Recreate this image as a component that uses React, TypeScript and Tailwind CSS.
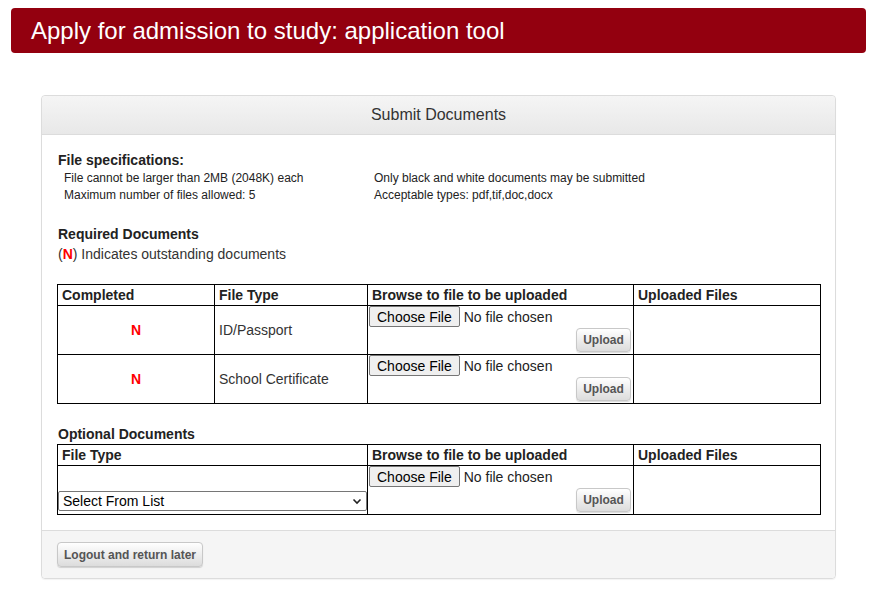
import React from "react";

const font = { fontFamily: '"Liberation Sans", Arial, sans-serif' };

function ChooseFile() {
  return (
    <div className="flex items-center h-[21px]">
      <span className="h-[21px] px-[7px] flex items-center bg-[#efefef] border border-[#767676] rounded-[2px] text-[14px] text-black leading-none">
        Choose File
      </span>
      <span className="ml-[4px] text-[14px] text-[#222] leading-none">No file chosen</span>
    </div>
  );
}

function UploadBtn() {
  return (
    <div className="flex justify-end mt-[1px] pr-[2px]">
      <span className="w-[55px] h-[24px] flex items-center justify-center text-[12px] font-bold text-[#555] border border-[#c8c8c8] rounded-[4px] bg-gradient-to-b from-white to-[#dcdcdc] shadow-[0_1px_1px_rgba(0,0,0,0.15)]">
        Upload
      </span>
    </div>
  );
}

export default function App() {
  const th = "border border-black text-left font-bold text-[14px] text-[#222] px-[4px] h-[21px] leading-[18px] align-middle";
  const tdBase = "border border-black text-[14px] text-[#333]";
  const tdMid = `${tdBase} align-middle`;
  const tdTop = `${tdBase} align-top p-0 pl-[1px] pt-0 pb-[1px]`;
  return (
    <div className="min-h-[592px] bg-white pt-[8px]" style={font}>
      <div className="ml-[11px] mr-[12px] h-[45px] bg-[#93000f] rounded-[4px] flex items-center pl-[20px]">
        <h1 className="text-white text-[24px] leading-none">Apply for admission to study: application tool</h1>
      </div>

      <div className="ml-[41px] w-[795px] mt-[42px] border border-[#dcdcdc] rounded-[4px] shadow-[0_1px_1px_rgba(0,0,0,0.05)]">
        <div className="h-[39px] bg-gradient-to-b from-[#f5f5f5] to-[#e8e8e8] border-b border-[#dcdcdc] rounded-t-[4px] flex items-center justify-center text-[16px] text-[#333]">
          Submit Documents
        </div>

        <div className="px-[15px] pt-[15px] pb-[15px]">
          <div className="font-bold text-[14px] text-[#222] leading-[20px] pl-[1px]">File specifications:</div>
          <div className="flex text-[12px] text-[#222] leading-[17px] pl-[7px]">
            <div className="w-[310px]">
              <div>File cannot be larger than 2MB (2048K) each</div>
              <div>Maximum number of files allowed: 5</div>
            </div>
            <div>
              <div>Only black and white documents may be submitted</div>
              <div>Acceptable types: pdf,tif,doc,docx</div>
            </div>
          </div>

          <div className="mt-[20px] font-bold text-[14px] text-[#222] leading-[20px] pl-[1px]">Required Documents</div>
          <div className="text-[14px] text-[#333] leading-[20px] pl-[1px]">
            (<span className="text-[#ff0000] font-bold">N</span>) Indicates outstanding documents
          </div>

          <table className="mt-[20px] w-[763px] border-collapse table-fixed">
            <colgroup>
              <col className="w-[157px]" />
              <col className="w-[153px]" />
              <col className="w-[266px]" />
              <col className="w-[187px]" />
            </colgroup>
            <thead>
              <tr>
                <th className={th}>Completed</th>
                <th className={th}>File Type</th>
                <th className={th}>Browse to file to be uploaded</th>
                <th className={th}>Uploaded Files</th>
              </tr>
            </thead>
            <tbody>
              {["ID/Passport", "School Certificate"].map((t) => (
                <tr key={t} className="h-[49px]">
                  <td className={`${tdMid} text-center`}>
                    <span className="text-[#ff0000] font-bold">N</span>
                  </td>
                  <td className={`${tdMid} px-[4px]`}>{t}</td>
                  <td className={tdTop}>
                    <ChooseFile />
                    <UploadBtn />
                  </td>
                  <td className={tdMid}></td>
                </tr>
              ))}
            </tbody>
          </table>

          <div className="mt-[20px] font-bold text-[14px] text-[#222] leading-[20px] pl-[1px]">Optional Documents</div>
          <table className="w-[763px] border-collapse table-fixed">
            <colgroup>
              <col className="w-[310px]" />
              <col className="w-[266px]" />
              <col className="w-[187px]" />
            </colgroup>
            <thead>
              <tr>
                <th className={th}>File Type</th>
                <th className={th}>Browse to file to be uploaded</th>
                <th className={th}>Uploaded Files</th>
              </tr>
            </thead>
            <tbody>
              <tr className="h-[49px]">
                <td className={`${tdBase} p-0`}>
                  <div className="flex flex-col h-[47px] justify-end pb-[3px]">
                    <div className="h-[20px] border border-[#767676] rounded-[2px] flex items-center justify-between pl-[4px] pr-[4px] bg-white">
                      <span className="text-[14px] text-black leading-none">Select From List</span>
                      <svg width="10" height="10" viewBox="0 0 10 10">
                        <path d="M1.5 3.5 L5 7 L8.5 3.5" fill="none" stroke="#222" strokeWidth="1.6" />
                      </svg>
                    </div>
                  </div>
                </td>
                <td className={tdTop}>
                  <ChooseFile />
                  <UploadBtn />
                </td>
                <td className={tdMid}></td>
              </tr>
            </tbody>
          </table>
        </div>

        <div className="h-[48px] bg-[#f5f5f5] border-t border-[#dcdcdc] rounded-b-[4px] flex items-center px-[15px]">
          <span className="h-[25px] px-[6px] flex items-center text-[12px] font-bold text-[#555] border border-[#c8c8c8] rounded-[4px] bg-gradient-to-b from-white to-[#dcdcdc] shadow-[0_1px_1px_rgba(0,0,0,0.15)]">
            Logout and return later
          </span>
        </div>
      </div>
    </div>
  );
}
